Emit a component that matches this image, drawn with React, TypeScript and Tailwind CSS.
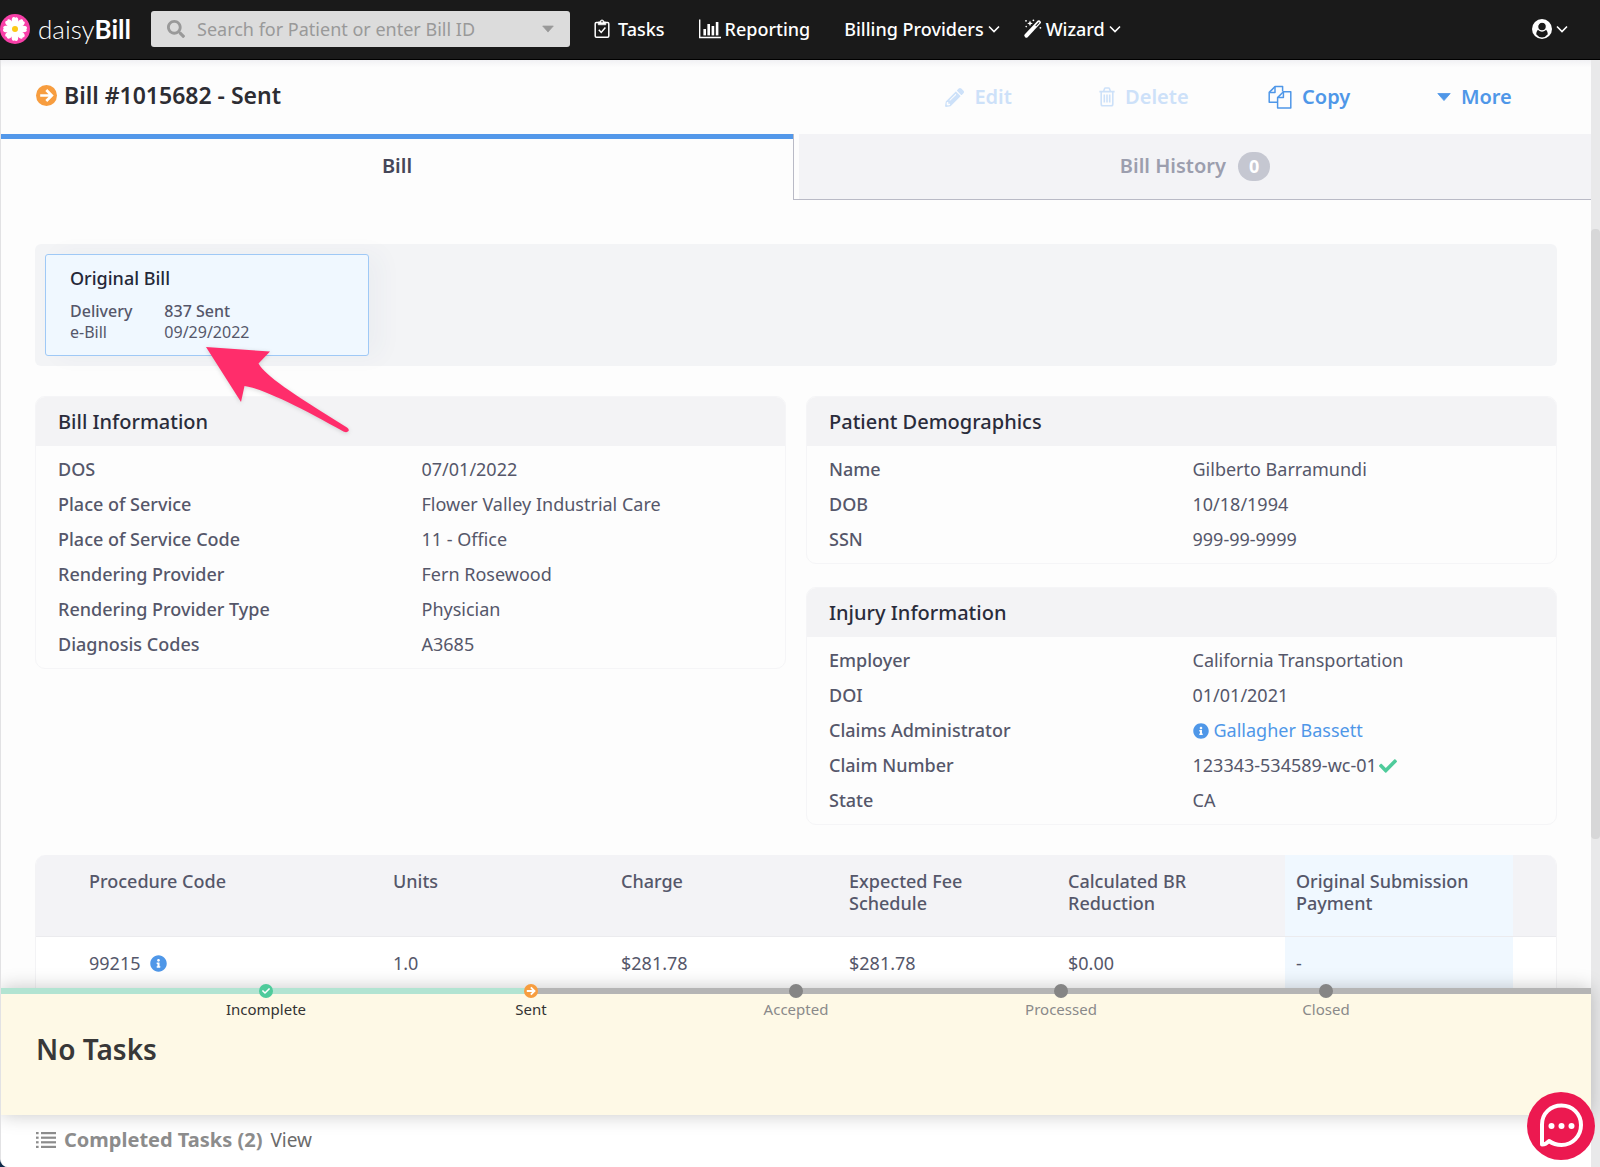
import type { ReactNode } from "react";
import { FaCheck, FaInfoCircle, FaPencilAlt, FaSearch } from "react-icons/fa";

function DaisyLogo() {
  return (
    <svg viewBox="0 0 30 30" className="size-[30px] shrink-0" aria-hidden="true">
      <circle cx="15" cy="15" r="15" fill="#f840a8" />
      {[0, 45, 90, 135, 180, 225, 270, 315].map((angle) => (
        <path
          key={angle}
          d="M15 15 C10.8 9.5 11 3 13.8 3 Q15 3 15.2 3.8 Q15.6 3 16.6 3.2 C19.2 3.6 19 9.5 15 15 Z"
          fill="#ffffff"
          transform={`rotate(${angle} 15 15)`}
        />
      ))}
      <circle cx="15" cy="15" r="3" fill="#fcc916" />
    </svg>
  );
}

function Chevron() {
  return (
    <svg viewBox="0 0 12 8" className="h-2 w-3 shrink-0" fill="none" stroke="currentColor" strokeWidth="1.6" aria-hidden="true">
      <path d="M1 1.5 L6 6.5 L11 1.5" />
    </svg>
  );
}

function Caret({ className }: { className: string }) {
  return (
    <svg viewBox="0 0 14 8" className={className} fill="currentColor" aria-hidden="true">
      <path d="M0.8 0.5 H13.2 L7 7.6 Z" strokeLinejoin="round" stroke="currentColor" strokeWidth="0.8" />
    </svg>
  );
}

function ClipboardCheckIcon() {
  return (
    <svg viewBox="0 0 16 20" className="h-5 w-4 shrink-0" fill="none" stroke="currentColor" strokeWidth="1.5" aria-hidden="true">
      <rect x="1.2" y="3.6" width="13.6" height="14.6" rx="1.2" />
      <path d="M4.2 5.8 V3 H6 C6 0.2 10 0.2 10 3 H11.8 V5.8 Z" fill="currentColor" strokeWidth="0.6" />
      <circle cx="8" cy="2.8" r="0.8" fill="#1a1a1a" stroke="none" />
      <path d="M4.8 10.8 L7.2 13.4 L11.4 8.6" />
    </svg>
  );
}

function BarChartIcon() {
  return (
    <svg viewBox="0 0 22 20" className="h-5 w-[22px] shrink-0" fill="currentColor" aria-hidden="true">
      <path d="M0 0.5 H1.4 V17.8 H22 V19.2 H0 Z" />
      <rect x="4.4" y="10" width="2.6" height="6.4" />
      <rect x="8.4" y="5" width="2.6" height="11.4" />
      <rect x="12.6" y="7" width="2.6" height="9.4" />
      <rect x="16.8" y="3" width="2.6" height="13.4" />
    </svg>
  );
}

function WandIcon() {
  return (
    <svg viewBox="0 0 18 20" className="h-5 w-[18px] shrink-0" fill="currentColor" aria-hidden="true">
      <path d="M0.6 15.6 L13.8 1.6 Q14.8 0.7 15.8 1.6 L16.6 2.4 Q17.5 3.3 16.6 4.3 L3.4 18.4 Q2.4 19.2 1.4 18.4 L0.7 17.6 Q-0.1 16.6 0.6 15.6 Z" />
      <path d="M11.4 6.6 L14.8 3 L15.5 3.7 L12.1 7.3 Z" fill="#1a1a1a" />
      <path d="M6 1.6 L6.8 3.6 L8.8 4.4 L6.8 5.2 L6 7.2 L5.2 5.2 L3.2 4.4 L5.2 3.6 Z" />
      <circle cx="2" cy="1.8" r="0.9" />
      <circle cx="9.4" cy="1.3" r="0.9" />
      <circle cx="2.2" cy="7.6" r="0.8" />
      <circle cx="16.4" cy="8.8" r="0.9" />
    </svg>
  );
}

function UserIcon() {
  return (
    <svg viewBox="0 0 20 20" className="size-5 shrink-0" aria-hidden="true">
      <circle cx="10" cy="10" r="10" fill="#ffffff" />
      <path d="M4.2 15.2 C4.4 12 5.6 10.6 7 10.2 H13 C14.4 10.6 15.6 12 15.8 15.2 Q13.4 18.4 10 18.4 Q6.6 18.4 4.2 15.2 Z" fill="#1a1a1a" />
      <circle cx="10" cy="7.6" r="4.4" fill="#1a1a1a" stroke="#ffffff" strokeWidth="1.3" />
    </svg>
  );
}

function TrashIcon() {
  return (
    <svg viewBox="0 0 16 20" className="h-5 w-4 shrink-0" fill="none" stroke="currentColor" strokeWidth="1.6" aria-hidden="true">
      <path d="M0.4 4.6 H15.6" />
      <path d="M4.6 4.4 L5.6 1.6 Q5.8 1 6.4 1 H9.6 Q10.2 1 10.4 1.6 L11.4 4.4" />
      <path d="M2.2 4.8 V17 Q2.2 18.8 3.8 18.8 H12.2 Q13.8 18.8 13.8 17 V4.8" />
      <path d="M5.3 7.6 V15.6 M8 7.6 V15.6 M10.7 7.6 V15.6" />
    </svg>
  );
}

function FilesIcon() {
  return (
    <svg viewBox="0 0 24 24" className="size-6 shrink-0" fill="none" stroke="currentColor" strokeWidth="1.5" strokeLinejoin="round" aria-hidden="true">
      <path d="M9 17.2 H1.2 V7.4 L7 1.6 H14.6 V6.6" />
      <path d="M1.4 7.4 H7 V1.8" />
      <path d="M9.6 23 V12.6 L15.4 6.8 H22.8 V23 Z" />
      <path d="M9.8 12.6 H15.4 V7" />
    </svg>
  );
}

function ArrowCircleIcon({ className }: { className: string }) {
  return (
    <svg viewBox="0 0 20 20" className={className} aria-hidden="true">
      <circle cx="10" cy="10" r="10" fill="#f79d3f" />
      <path d="M4 10 H14.5 M9.8 4.8 L15 10 L9.8 15.2" fill="none" stroke="#ffffff" strokeWidth="2.6" />
    </svg>
  );
}

function ListIcon() {
  return (
    <svg viewBox="0 0 20 16" className="h-4 w-5 shrink-0" fill="currentColor" aria-hidden="true">
      {[0, 4.6, 9.2, 13.8].map((y) => (
        <g key={y}>
          <rect x="0" y={y} width="2.6" height="2.2" />
          <rect x="5" y={y} width="15" height="2.2" />
        </g>
      ))}
    </svg>
  );
}

function PointerArrow() {
  return (
    <svg viewBox="0 0 156 100" className="pointer-events-none absolute top-24 left-[165px] z-10 h-[100px] w-[156px] drop-shadow-sm" aria-hidden="true">
      <path
        d="M6 7 L70 11.5 L58.5 23.5 C66 36 90 52 147 87.5 Q149.5 89.5 148.5 91 Q147 93 143.5 91.5 C104 69 62 48 44.5 46 L41 62 Z"
        fill="#ff2d6b"
      />
    </svg>
  );
}

const navItem = "flex items-center text-[18px] font-medium whitespace-nowrap text-white";

function NavBar() {
  return (
    <header className="z-20 flex h-[60px] shrink-0 items-center border-b border-black bg-[#1a1a1a] pb-px">
      <a href="#home" className="flex items-center gap-2 font-[Lato,sans-serif] text-[26px] leading-8 text-white">
        <DaisyLogo />
        <span>
          <span className="font-light">daisy</span>
          <span className="font-bold">Bill</span>
        </span>
      </a>
      <div className="ml-5 flex h-9 w-[419px] items-center rounded-[3px] bg-[#dcdcdc] px-4 text-[#999999]">
        <FaSearch className="size-[18px] shrink-0" />
        <input
          type="search"
          aria-label="Search for Patient or enter Bill ID"
          placeholder="Search for Patient or enter Bill ID"
          className="ml-3 min-w-0 flex-1 bg-transparent text-[18px] text-[#333333] outline-none placeholder:text-[#999999]"
        />
        <button type="button" aria-label="Open search options">
          <Caret className="h-2 w-3" />
        </button>
      </div>
      <nav className="flex items-center">
        <a href="#tasks" className={`${navItem} ml-6 gap-2`}>
          <ClipboardCheckIcon />
          Tasks
        </a>
        <a href="#reporting" className={`${navItem} ml-[34px] gap-1`}>
          <BarChartIcon />
          Reporting
        </a>
        <button type="button" className={`${navItem} ml-[34px] gap-1`}>
          Billing Providers
          <Chevron />
        </button>
        <button type="button" className={`${navItem} ml-6 gap-1`}>
          <WandIcon />
          Wizard
          <Chevron />
        </button>
      </nav>
      <button type="button" aria-label="Account" className="mr-8 ml-auto flex items-center gap-1 text-white">
        <UserIcon />
        <Chevron />
      </button>
    </header>
  );
}

function PageHeader() {
  const action = "flex items-center justify-center gap-2.5 text-[20px] font-semibold";
  return (
    <div className="flex h-[74px] items-center justify-between bg-linear-to-b from-[#f1f1f4] to-[#fdfdfd] to-10% pr-[34px] pl-[35px]">
      <h1 className="flex items-center gap-[7px] pb-1 text-[23px] font-semibold text-[#2d2d33]">
        <ArrowCircleIcon className="size-[21px] shrink-0" />
        Bill #1015682 - Sent
      </h1>
      <div className="grid w-[661px] grid-cols-4 text-[#4f97e8]">
        <button type="button" disabled className={`${action} text-[#cde1f9]`}>
          <FaPencilAlt className="size-[19px]" />
          Edit
        </button>
        <button type="button" disabled className={`${action} text-[#cde1f9]`}>
          <TrashIcon />
          Delete
        </button>
        <button type="button" className={action}>
          <FilesIcon />
          Copy
        </button>
        <button type="button" className={action}>
          <Caret className="h-2 w-3.5" />
          More
        </button>
      </div>
    </div>
  );
}

function Tabs() {
  return (
    <div role="tablist" className="grid h-[66px] grid-cols-[calc(50%-3px)_1fr] text-[20px] font-semibold">
      <button type="button" role="tab" aria-selected="true" className="border-t-[5px] border-[#5398ea] pb-2 text-[#454658]">
        Bill
      </button>
      <div className="flex border-b border-l border-[#b9bac6] pl-[5px]">
        <button
          type="button"
          role="tab"
          aria-selected="false"
          className="flex flex-1 items-center justify-center gap-3 bg-[#f3f3f6] text-[#9c9eae]"
        >
          <span className="pb-0.5">Bill History</span>
          <span className="rounded-full bg-[#c5c7d1] px-[11px] text-[18px] leading-[29px] font-bold text-white">0</span>
        </button>
      </div>
    </div>
  );
}

function BillStrip() {
  return (
    <section className="relative mt-11 rounded-md bg-[#f3f4f6] p-2.5">
      <button
        type="button"
        className="block w-[324px] rounded-[3px] border border-[#9fc9f6] bg-[#f0f8ff] px-6 pt-2.5 pb-3 text-left shadow-[12px_0_24px_rgba(60,80,120,0.04)]"
      >
        <span className="block text-[18px] leading-[26px] font-medium text-[#252838]">Original Bill</span>
        <span className="mt-2.5 flex gap-x-8 text-[16px] leading-[21px] text-[#55576a]">
          <span>
            <span className="block font-medium">Delivery</span>
            <span className="block">e-Bill</span>
          </span>
          <span>
            <span className="block font-medium">837 Sent</span>
            <span className="block">09/29/2022</span>
          </span>
        </span>
      </button>
      <PointerArrow />
    </section>
  );
}

type Row = { label: string; value: ReactNode };

function Panel({ title, rows }: { title: string; rows: Row[] }) {
  return (
    <section className="overflow-hidden rounded-[10px] border border-[#f5f5f7]">
      <h2 className="bg-[#f3f3f5] px-[22px] text-[20px] leading-[49px] font-medium text-[#2a2c3b]">{title}</h2>
      <dl className="px-[22px] py-1.5 text-[18px] leading-[35px] text-[#55576a]">
        {rows.map((row) => (
          <div key={row.label} className="grid grid-cols-2 gap-[22px]">
            <dt className="font-medium">{row.label}</dt>
            <dd>{row.value}</dd>
          </div>
        ))}
      </dl>
    </section>
  );
}

const billRows: Row[] = [
  { label: "DOS", value: "07/01/2022" },
  { label: "Place of Service", value: "Flower Valley Industrial Care" },
  { label: "Place of Service Code", value: "11 - Office" },
  { label: "Rendering Provider", value: "Fern Rosewood" },
  { label: "Rendering Provider Type", value: "Physician" },
  { label: "Diagnosis Codes", value: "A3685" },
];

const patientRows: Row[] = [
  { label: "Name", value: "Gilberto Barramundi" },
  { label: "DOB", value: "10/18/1994" },
  { label: "SSN", value: "999-99-9999" },
];

const injuryRows: Row[] = [
  { label: "Employer", value: "California Transportation" },
  { label: "DOI", value: "01/01/2021" },
  {
    label: "Claims Administrator",
    value: (
      <a href="#claims-administrator" className="flex items-center gap-[5px] text-[#4f97e8]">
        <FaInfoCircle className="size-4" />
        Gallagher Bassett
      </a>
    ),
  },
  {
    label: "Claim Number",
    value: (
      <span className="flex items-center gap-0.5">
        123343-534589-wc-01
        <FaCheck className="size-[18px] text-[#4fcb9b]" />
      </span>
    ),
  },
  { label: "State", value: "CA" },
];

function ProcedureTable() {
  const head = "px-[11px] pt-[15px] pb-[22px] align-top font-medium whitespace-nowrap";
  const cell = "px-[11px] pt-3 pb-3 whitespace-nowrap";
  return (
    <div className="mt-[30px] overflow-hidden rounded-t-[10px] border-x border-[#f3f3f5] bg-white">
      <table className="w-full table-fixed text-left text-[18px] text-[#55576a]">
        <colgroup>
          <col className="w-[42px]" />
          <col className="w-[20%]" />
          <col className="w-[15%]" />
          <col className="w-[15%]" />
          <col />
          <col className="w-[15%]" />
          <col className="w-[15%]" />
          <col className="w-[43px]" />
        </colgroup>
        <thead>
          <tr className="border-b border-[#ebebee] bg-[#f3f3f6] leading-[22px]">
            <td />
            <th className={head}>Procedure Code</th>
            <th className={head}>Units</th>
            <th className={head}>Charge</th>
            <th className={head}>Expected Fee<br />Schedule</th>
            <th className={head}>Calculated BR<br />Reduction</th>
            <th className={`${head} bg-[#f0f8ff]`}>Original Submission<br />Payment</th>
            <td />
          </tr>
        </thead>
        <tbody>
          <tr className="leading-7">
            <td />
            <td className={cell}>
              <span className="flex items-center gap-2.5">
                99215
                <FaInfoCircle className="size-[17px] text-[#4f97e8]" />
              </span>
            </td>
            <td className={cell}>1.0</td>
            <td className={cell}>$281.78</td>
            <td className={cell}>$281.78</td>
            <td className={cell}>$0.00</td>
            <td className={`${cell} bg-[#f0f8ff]`}>-</td>
            <td />
          </tr>
        </tbody>
      </table>
    </div>
  );
}

function ProgressTrack() {
  const step = "flex w-1/6 shrink-0 flex-col items-center gap-px text-[15px] leading-5";
  return (
    <div>
      <div className="flex h-1.5">
        <div className="w-1/3 bg-[#b2e4d2]" />
        <div className="flex-1 bg-[#b5b5b5]" />
      </div>
      <ol className="-mt-2.5 flex justify-center text-[#8a8a8a]">
        <li className={`${step} text-[#333333]`}>
          <span className="flex size-3.5 items-center justify-center rounded-full bg-[#4fcb9b]">
            <FaCheck className="size-2 text-white" />
          </span>
          Incomplete
        </li>
        <li className={`${step} text-[#333333]`}>
          <ArrowCircleIcon className="size-3.5" />
          Sent
        </li>
        {["Accepted", "Processed", "Closed"].map((name) => (
          <li key={name} className={step}>
            <span className="size-3.5 rounded-full bg-[#858585]" />
            {name}
          </li>
        ))}
      </ol>
    </div>
  );
}

function TaskDock() {
  return (
    <footer className="z-10 shrink-0 bg-white">
      <div className="bg-[#fef9e6] shadow-[0_0_18px_rgba(0,0,0,0.22)]">
        <ProgressTrack />
        <h2 className="px-[35px] pt-2.5 pb-[46px] text-[28px] leading-10 font-semibold text-[#383838]">No Tasks</h2>
      </div>
      <div className="flex h-[52px] items-center px-[35px] pb-0.5 text-[20px] text-[#8c8c8c]">
        <ListIcon />
        <h2 className="ml-2 font-bold">Completed Tasks (2)</h2>
        <button type="button" className="ml-2 text-[19px] text-[#6b6b6b]">
          View
        </button>
      </div>
    </footer>
  );
}

function ChatButton() {
  return (
    <button type="button" aria-label="Open chat" className="fixed right-[5px] bottom-[7px] z-30">
      <svg viewBox="0 0 68 68" className="size-[68px]" aria-hidden="true">
        <circle cx="34" cy="34" r="34" fill="#ec1950" />
        <path
          d="M15 52.5 V32.5 C15 21.5 23.5 13.5 34.5 13.5 C45.5 13.5 54 22 54 33 C54 44 45.5 53 34.5 53 C30 53 25.5 51.5 22 49 Q19 52.5 15 52.5 Z"
          fill="none"
          stroke="#ffffff"
          strokeWidth="4"
          strokeLinejoin="round"
        />
        <circle cx="24.5" cy="34" r="3" fill="#ffffff" />
        <circle cx="34.5" cy="34" r="3" fill="#ffffff" />
        <circle cx="44.5" cy="34" r="3" fill="#ffffff" />
      </svg>
    </button>
  );
}

export default function App() {
  return (
    <div className="flex h-screen flex-col bg-[#0f2a4a] font-['Noto_Sans','Open_Sans',sans-serif]">
      <NavBar />
      <div className="flex min-h-0 flex-1 overflow-hidden rounded-bl-lg border-l border-[#e2e2e4] bg-[#fdfdfd]">
        <div className="flex min-w-0 flex-1 flex-col">
          <main className="min-h-0 flex-1 overflow-hidden">
            <PageHeader />
            <Tabs />
            <div className="px-[34px]">
              <BillStrip />
              <div className="mt-[30px] grid grid-cols-2 items-start gap-5">
                <Panel title="Bill Information" rows={billRows} />
                <div className="flex flex-col gap-[23px]">
                  <Panel title="Patient Demographics" rows={patientRows} />
                  <Panel title="Injury Information" rows={injuryRows} />
                </div>
              </div>
              <ProcedureTable />
            </div>
          </main>
          <TaskDock />
        </div>
        <div aria-hidden="true" className="flex w-[9px] shrink-0 flex-col bg-[#e9e9ea] pt-[169px]">
          <div className="h-[65%] rounded-sm bg-[#d7d7d8]" />
        </div>
      </div>
      <ChatButton />
    </div>
  );
}
